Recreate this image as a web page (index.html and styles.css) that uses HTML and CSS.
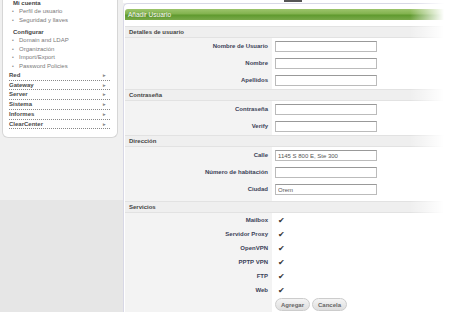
FILE: index.html
```html
<!DOCTYPE html>
<html lang="es">
<head>
    <meta charset="UTF-8">
    <title>Añadir Usuario</title>
    <link rel="stylesheet" href="styles.css">
</head>
<body>
    <div class="layout">
        <aside class="sidebar">
            <div class="menu-box">
                <div class="menu-group">Mi cuenta</div>
                <ul class="menu-list">
                    <li>Perfil de usuario</li>
                    <li>Seguridad y llaves</li>
                </ul>
                <div class="menu-group spaced">Configurar</div>
                <ul class="menu-list">
                    <li>Domain and LDAP</li>
                    <li>Organización</li>
                    <li>Import/Export</li>
                    <li>Password Policies</li>
                </ul>
                <div class="menu-cat first">Red <span>&#9656;</span></div>
                <div class="menu-cat">Gateway <span>&#9656;</span></div>
                <div class="menu-cat">Server <span>&#9656;</span></div>
                <div class="menu-cat">Sistema <span>&#9656;</span></div>
                <div class="menu-cat">Informes <span>&#9656;</span></div>
                <div class="menu-cat">ClearCenter <span>&#9656;</span></div>
            </div>
        </aside>

        <main class="content">
            <div class="topbar"><span class="top-btn"></span></div>
            <div class="panel">
                <div class="panel-title">Añadir Usuario</div>

                <div class="section-head first">Detalles de usuario</div>
                <div class="row"><label>Nombre de Usuario</label><div class="field"><input type="text"></div></div>
                <div class="row"><label>Nombre</label><div class="field"><input type="text"></div></div>
                <div class="row"><label>Apellidos</label><div class="field"><input type="text"></div></div>

                <div class="section-head">Contraseña</div>
                <div class="row"><label>Contraseña</label><div class="field"><input type="password"></div></div>
                <div class="row"><label>Verify</label><div class="field"><input type="password"></div></div>

                <div class="section-head">Dirección</div>
                <div class="row"><label>Calle</label><div class="field"><input type="text" value="1145 S 800 E, Ste 300"></div></div>
                <div class="row"><label>Número de habitación</label><div class="field"><input type="text"></div></div>
                <div class="row tall"><label>Ciudad</label><div class="field"><input type="text" value="Orem"></div></div>

                <div class="section-head">Servicios</div>
                <div class="row check"><label>Mailbox</label><div class="field"><span class="tick">&#10004;</span></div></div>
                <div class="row check"><label>Servidor Proxy</label><div class="field"><span class="tick">&#10004;</span></div></div>
                <div class="row check"><label>OpenVPN</label><div class="field"><span class="tick">&#10004;</span></div></div>
                <div class="row check"><label>PPTP VPN</label><div class="field"><span class="tick">&#10004;</span></div></div>
                <div class="row check"><label>FTP</label><div class="field"><span class="tick">&#10004;</span></div></div>
                <div class="row check"><label>Web</label><div class="field"><span class="tick">&#10004;</span></div></div>
                <div class="row buttons"><label></label><div class="field"><button>Agregar</button><button>Cancela</button></div></div>
            </div>
            <div class="fade"></div>
        </main>
    </div>
</body>
</html>
```

FILE: styles.css
```css
body {
    margin: 0;
    padding: 0;
    font-family: "Liberation Sans", Arial, sans-serif;
    font-size: 6px;
    background: linear-gradient(#f0f0f0 0, #f0f0f0 200px, #e6e6e6 200px);
    height: 312px;
    overflow: hidden;
}

.layout {
    display: flex;
    align-items: flex-start;
}

/* sidebar */

.sidebar {
    width: 118px;
    flex: none;
}

.menu-box {
    margin: -6px 0 0 2px;
    padding: 6px 7px 8px 6px;
    background: #fff;
    border: 1px solid #d6d6d6;
    border-top: none;
    border-radius: 0 0 6px 6px;
    height: 129px;
}

.menu-group {
    font-weight: bold;
    color: #444;
    padding-left: 4px;
    line-height: 8px;
    margin-top: -1px;
}

.menu-group.spaced {
    margin-top: 4px;
}

.menu-list {
    list-style: none;
    margin: 0;
    padding: 0 0 0 3px;
}

.menu-list li {
    color: #7a7a7a;
    line-height: 8.5px;
}

.menu-list li::before {
    content: "\2022";
    display: inline-block;
    width: 7px;
    font-size: 5px;
    color: #888;
}

.menu-cat {
    display: flex;
    justify-content: space-between;
    font-weight: bold;
    color: #4a4a4a;
    line-height: 8.7px;
    border-bottom: 1px dotted #888;
    padding-right: 4px;
}

.menu-cat.first {
    margin-top: 1px;
}

.menu-cat span {
    font-size: 5px;
    color: #888;
}

/* main */

.content {
    flex: 1;
    position: relative;
    margin-left: 5px;
    height: 312px;
}

.topbar {
    height: 3px;
    background: #fff;
    position: relative;
}

.top-btn {
    position: absolute;
    left: 161px;
    top: 0;
    width: 18px;
    height: 2px;
    background: #555;
}

.panel {
    background: #fff;
    border: 1px solid #d8d8e6;
    border-right: none;
    border-radius: 5px 0 0 0;
    padding: 5px 0 0 1px;
    height: 308px;
}

.panel-title {
    height: 11px;
    line-height: 11px;
    padding-left: 3px;
    color: #fff;
    font-size: 6.5px;
    text-shadow: 0 0 1px rgba(60, 100, 20, 0.6);
    background: linear-gradient(#9cc46c, #82b24e 45%, #5f9a2e 55%, #79a94a);
    border-radius: 3px 0 0 0;
}

.section-head {
    height: 10px;
    line-height: 10px;
    padding-left: 4px;
    font-weight: bold;
    color: #444;
    background: #efefef;
    border-top: 1px solid #e2e2e2;
    border-bottom: 1px solid #e2e2e2;
}

.section-head.first {
    margin-top: 6px;
}

.row {
    display: grid;
    grid-template-columns: 147px 1fr;
    height: 17px;
}

.row.tall {
    height: 20px;
}

.row label {
    background: #f3f3f3;
    text-align: right;
    padding-right: 4px;
    font-weight: bold;
    color: #3b4258;
    line-height: 17px;
}

.field {
    display: flex;
    align-items: flex-start;
    padding: 3px 0 0 3px;
}

.field input {
    width: 102px;
    height: 11px;
    box-sizing: border-box;
    border: 1px solid #bbb;
    border-top-color: #999;
    padding: 0 2px;
    font-family: inherit;
    font-size: 6px;
    color: #555;
    background: #fff;
}

.row.check {
    height: 14px;
}

.row.check label {
    line-height: 14px;
}

.row.check .field {
    align-items: center;
    padding-top: 0;
}

.tick {
    margin-left: 3px;
    font-size: 8px;
    color: #333;
}

.row.buttons {
    height: 16px;
}

.row.buttons .field {
    padding-top: 1px;
}

.field button {
    font-family: inherit;
    font-size: 6px;
    font-weight: bold;
    color: #666;
    background: linear-gradient(#f4f4f4, #dedede);
    border: 1px solid #ccc;
    border-radius: 7px;
    height: 13px;
    padding: 0 5px;
    margin-right: 2px;
}

.fade {
    position: absolute;
    top: 0;
    right: 0;
    width: 40px;
    height: 312px;
    background: linear-gradient(to right, rgba(255, 255, 255, 0), #fff 85%);
}
```
